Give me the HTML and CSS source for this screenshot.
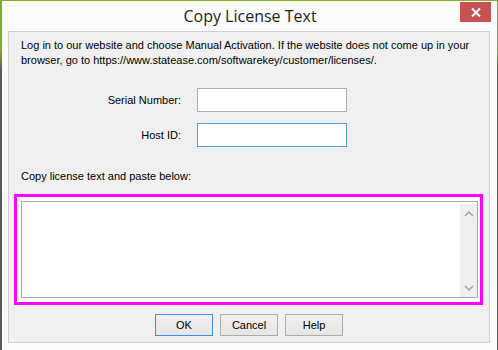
FILE: index.html
```html
<!DOCTYPE html>
<html lang="en">
<head>
    <meta charset="UTF-8">
    <title>Copy License Text</title>
    <link rel="stylesheet" href="styles.css">
</head>
<body>
    <div class="window">
        <div class="titlebar">
            <span></span>
            <h1 class="title">Copy License Text</h1>
            <button class="close" aria-label="Close">
                <svg width="10" height="9" viewBox="0 0 10 9">
                    <path d="M1 0.5 L9 8.5 M9 0.5 L1 8.5" stroke="#fff" stroke-width="2"/>
                </svg>
            </button>
        </div>

        <div class="panel">
            <p class="intro">Log in to our website and choose Manual Activation. If the website does not come up in your browser, go to https://www.statease.com/softwarekey/customer/licenses/.</p>

            <div class="fields">
                <label for="serial">Serial Number:</label>
                <input type="text" id="serial">
                <label for="host">Host ID:</label>
                <input type="text" id="host" class="focused">
            </div>

            <p class="copy-label">Copy license text and paste below:</p>

            <div class="highlight">
                <div class="license">
                    <div class="license-text"></div>
                    <div class="scrollbar">
                        <svg width="10" height="6" viewBox="0 0 10 6"><path d="M1 5 L5 1 L9 5" fill="none" stroke="#a6a6a6" stroke-width="1.6"/></svg>
                        <svg width="10" height="6" viewBox="0 0 10 6"><path d="M1 1 L5 5 L9 1" fill="none" stroke="#a6a6a6" stroke-width="1.6"/></svg>
                    </div>
                </div>
            </div>

            <div class="buttons">
                <button class="btn default">OK</button>
                <button class="btn">Cancel</button>
                <button class="btn">Help</button>
            </div>
        </div>
    </div>
</body>
</html>
```

FILE: styles.css
```css
html, body {
    margin: 0;
    padding: 0;
}
body {
    width: 498px;
    height: 350px;
    overflow: hidden;
    font-family: "Liberation Sans", Arial, sans-serif;
    font-size: 11px;
    color: #000;
}
.window {
    box-sizing: border-box;
    width: 498px;
    height: 350px;
    background: #fbfbfb;
    border-style: solid;
    border-width: 1px 1px 0 2px;
    border-image: linear-gradient(to bottom, #83ab2c 0, #83ab2c 50px, #5c5c5c 70px, #5c5c5c 100%) 1;
}
.titlebar {
    height: 30px;
    display: grid;
    grid-template-columns: 1fr auto 1fr;
}
.title {
    margin: 0;
    font-family: "Open Sans", "Noto Sans", sans-serif;
    font-weight: normal;
    font-size: 16px;
    line-height: 31px;
    color: #1f1f1f;
    padding-left: 1px;
}
.close {
    justify-self: end;
    margin: 1px 6px 0 0;
    width: 31px;
    height: 20px;
    border: none;
    padding: 0;
    background: #c75050;
    display: flex;
    align-items: center;
    justify-content: center;
}
.panel {
    box-sizing: border-box;
    margin: 0 7px 0 6px;
    height: 312px;
    border: 1px solid #cfcfcf;
    background: #f0f0f0;
    padding: 6px 0 0 12px;
}
.intro {
    margin: 0;
    line-height: 15px;
    width: 455px;
}
.fields {
    display: grid;
    grid-template-columns: 160px 150px;
    column-gap: 16px;
    row-gap: 11px;
    align-items: center;
    margin-top: 20px;
}
.fields label {
    text-align: right;
}
.fields input {
    box-sizing: border-box;
    width: 150px;
    height: 24px;
    margin: 0;
    border: 1px solid #adadad;
    background: #fff;
    outline: none;
}
.fields input.focused {
    border-color: #5a9fe4;
}
.copy-label {
    margin: 22px 0 0;
    line-height: 15px;
}
.highlight {
    box-sizing: border-box;
    margin: 10px 0 0 -7px;
    width: 469px;
    height: 111px;
    border: 3px solid #ff00ff;
    background: #fff;
    padding: 4px 2px 4px 4px;
}
.license {
    box-sizing: border-box;
    height: 97px;
    border: 1px solid #a8a8a8;
    background: #fff;
    display: flex;
}
.license-text {
    flex: 1;
}
.scrollbar {
    width: 17px;
    background: #efefef;
    display: flex;
    flex-direction: column;
    justify-content: space-between;
    align-items: center;
    padding: 7px 0 6px;
    margin: 2px 0 0;
}
.buttons {
    display: flex;
    justify-content: center;
    gap: 7px;
    margin: 9px 0 0 -12px;
}
.btn {
    box-sizing: border-box;
    width: 58px;
    height: 22px;
    padding: 0;
    border: 1px solid #adadad;
    background: linear-gradient(to bottom, #f0f0f0, #e5e5e5);
    font-family: "Liberation Sans", Arial, sans-serif;
    font-size: 11px;
    color: #000;
}
.btn.default {
    border-color: #3c92e6;
}
```
